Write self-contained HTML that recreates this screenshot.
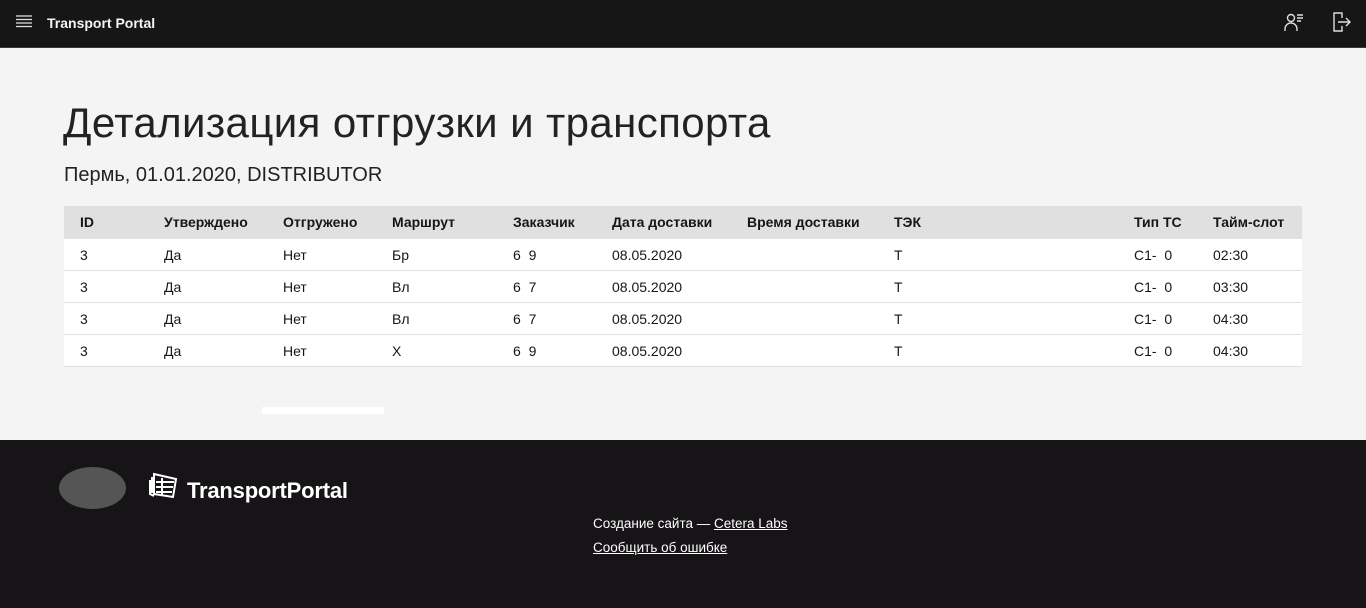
<!DOCTYPE html>
<html><head><meta charset="utf-8"><style>
*{margin:0;padding:0;box-sizing:border-box}
body{width:1366px;height:608px;overflow:hidden;background:#f4f4f4;font-family:"Liberation Sans",sans-serif;color:#161616;position:relative}
.hdr{position:absolute;left:0;top:0;width:1366px;height:48px;background:#161616;border-bottom:1px solid #393939}
.hdr .t{position:absolute;left:47px;top:15px;color:#f4f4f4;font-weight:bold;font-size:14px}
h1{position:absolute;left:63px;top:99px;font-size:42px;font-weight:300;letter-spacing:0.4px;color:#222}
.sub{position:absolute;left:64px;top:164px;font-size:20px;color:#222}
table{position:absolute;left:64px;top:206px;width:1238px;border-collapse:collapse;font-size:14px}
th{background:#e0e0e0;height:32px;text-align:left;font-weight:bold;padding:0}
td{background:#fff;height:32px;border-top:1px solid #e0e0e0;padding:1px 0 0;color:#161616}
tr:last-child td{border-bottom:1px solid #e0e0e0}
.ft{position:absolute;left:0;top:440px;width:1366px;height:168px;background:#171417}
a{color:#fff;text-decoration:underline}
</style></head><body>
<div class="hdr">
<svg style="position:absolute;left:16px;top:15px" width="17" height="14"><g stroke="#ddd" stroke-width="1.3"><line x1="0" y1="1" x2="16" y2="1"/><line x1="0" y1="4.5" x2="16" y2="4.5"/><line x1="0" y1="8" x2="16" y2="8"/><line x1="0" y1="11.5" x2="16" y2="11.5"/></g></svg>
<div class="t">Transport Portal</div>
<svg style="position:absolute;left:1284px;top:12px" width="22" height="20" fill="none" stroke="#ddd" stroke-width="1.4"><circle cx="7" cy="6" r="3.5"/><path d="M1 19v-2a6 6 0 0 1 12 0v2"/><path d="M13 3h6M13 6h6M13 9h4"/></svg>
<svg style="position:absolute;left:1332px;top:11px" width="20" height="22" fill="none" stroke="#ddd" stroke-width="1.4"><path d="M10 7V2H2v18h8v-5"/><path d="M6 11h12M14 7l4 4-4 4"/></svg>
</div>
<h1>Детализация отгрузки и транспорта</h1>
<div class="sub">Пермь, 01.01.2020, DISTRIBUTOR</div>
<table>
<colgroup><col style="width:100px"><col style="width:119px"><col style="width:109px"><col style="width:121px"><col style="width:99px"><col style="width:135px"><col style="width:147px"><col style="width:240px"><col style="width:79px"><col></colgroup>
<tr><th style="padding-left:16px">ID</th><th>Утверждено</th><th>Отгружено</th><th>Маршрут</th><th>Заказчик</th><th>Дата доставки</th><th>Время доставки</th><th>ТЭК</th><th>Тип ТС</th><th>Тайм-слот</th></tr>
<tr><td style="padding-left:16px">3</td><td>Да</td><td>Нет</td><td>Бр</td><td>6&nbsp;&nbsp;9</td><td>08.05.2020</td><td></td><td>Т</td><td>С1-&nbsp;&nbsp;0</td><td>02:30</td></tr>
<tr><td style="padding-left:16px">3</td><td>Да</td><td>Нет</td><td>Вл</td><td>6&nbsp;&nbsp;7</td><td>08.05.2020</td><td></td><td>Т</td><td>С1-&nbsp;&nbsp;0</td><td>03:30</td></tr>
<tr><td style="padding-left:16px">3</td><td>Да</td><td>Нет</td><td>Вл</td><td>6&nbsp;&nbsp;7</td><td>08.05.2020</td><td></td><td>Т</td><td>С1-&nbsp;&nbsp;0</td><td>04:30</td></tr>
<tr><td style="padding-left:16px">3</td><td>Да</td><td>Нет</td><td>Х</td><td>6&nbsp;&nbsp;9</td><td>08.05.2020</td><td></td><td>Т</td><td>С1-&nbsp;&nbsp;0</td><td>04:30</td></tr>
</table>
<div style="position:absolute;left:262px;top:407px;width:122px;height:7px;background:#fff"></div>
<div class="ft">
<div style="position:absolute;left:59px;top:27px;width:67px;height:42px;border-radius:50%;background:#555"></div>
<svg style="position:absolute;left:148px;top:32px" width="32" height="28" fill="none" stroke="#fff" stroke-width="2"><path d="M6 2l22 5-3 18-19-3z"/><path d="M8 10h18M8 15h17M8 20h16M14 6v18"/><path d="M2 8v14l4 2M4 5v16"/></svg>
<div style="position:absolute;left:187px;top:38px;color:#fff;font-size:22px;font-weight:bold;letter-spacing:-0.2px">TransportPortal</div>
<div style="position:absolute;left:593px;top:72px;color:#fff;font-size:13.5px;line-height:24px">Создание сайта — <a>Cetera Labs</a><br><a>Сообщить об ошибке</a></div>
</div>
</body></html>
